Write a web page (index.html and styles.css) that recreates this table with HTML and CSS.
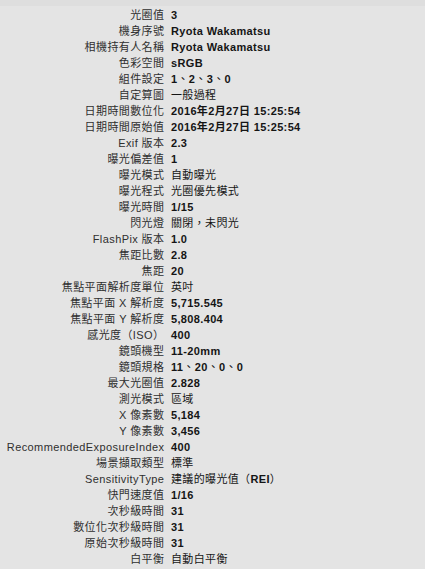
FILE: index.html
```html
<!DOCTYPE html>
<html lang="zh-Hant">
<head>
<meta charset="utf-8">
<title>Exif</title>
<link rel="stylesheet" href="styles.css">
</head>
<body>
<div class="strip"></div>
<div class="list">
  <div class="k">光圈值</div><div class="v">3</div>
  <div class="k">機身序號</div><div class="v">Ryota Wakamatsu</div>
  <div class="k">相機持有人名稱</div><div class="v">Ryota Wakamatsu</div>
  <div class="k">色彩空間</div><div class="v">sRGB</div>
  <div class="k">組件設定</div><div class="v">1<span class="c">、</span>2<span class="c">、</span>3<span class="c">、</span>0</div>
  <div class="k">自定算圖</div><div class="v"><span class="c">一般過程</span></div>
  <div class="k">日期時間數位化</div><div class="v">2016年2月27日 15:25:54</div>
  <div class="k">日期時間原始值</div><div class="v">2016年2月27日 15:25:54</div>
  <div class="k">Exif 版本</div><div class="v">2.3</div>
  <div class="k">曝光偏差值</div><div class="v">1</div>
  <div class="k">曝光模式</div><div class="v"><span class="c">自動曝光</span></div>
  <div class="k">曝光程式</div><div class="v"><span class="c">光圈優先模式</span></div>
  <div class="k">曝光時間</div><div class="v">1/15</div>
  <div class="k">閃光燈</div><div class="v"><span class="c">關閉，未閃光</span></div>
  <div class="k">FlashPix 版本</div><div class="v">1.0</div>
  <div class="k">焦距比數</div><div class="v">2.8</div>
  <div class="k">焦距</div><div class="v">20</div>
  <div class="k">焦點平面解析度單位</div><div class="v"><span class="c">英吋</span></div>
  <div class="k">焦點平面 X 解析度</div><div class="v">5,715.545</div>
  <div class="k">焦點平面 Y 解析度</div><div class="v">5,808.404</div>
  <div class="k">感光度（ISO）</div><div class="v">400</div>
  <div class="k">鏡頭機型</div><div class="v">11-20mm</div>
  <div class="k">鏡頭規格</div><div class="v">11<span class="c">、</span>20<span class="c">、</span>0<span class="c">、</span>0</div>
  <div class="k">最大光圈值</div><div class="v">2.828</div>
  <div class="k">測光模式</div><div class="v"><span class="c">區域</span></div>
  <div class="k">X 像素數</div><div class="v">5,184</div>
  <div class="k">Y 像素數</div><div class="v">3,456</div>
  <div class="k">RecommendedExposureIndex</div><div class="v">400</div>
  <div class="k">場景擷取類型</div><div class="v"><span class="c">標準</span></div>
  <div class="k">SensitivityType</div><div class="v"><span class="c">建議的曝光值（</span>REI<span class="c">）</span></div>
  <div class="k">快門速度值</div><div class="v">1/16</div>
  <div class="k">次秒級時間</div><div class="v">31</div>
  <div class="k">數位化次秒級時間</div><div class="v">31</div>
  <div class="k">原始次秒級時間</div><div class="v">31</div>
  <div class="k">白平衡</div><div class="v"><span class="c">自動白平衡</span></div>
</div>
</body>
</html>
```
FILE: styles.css
```css
html, body {
  margin: 0;
  padding: 0;
  background: #e4e4e4;
}
body {
  font-family: "Liberation Sans", "Noto Sans CJK TC", sans-serif;
  font-size: 11px;
  letter-spacing: 0.35px;
  width: 425px;
  height: 569px;
  overflow: hidden;
}
.strip {
  height: 6px;
  background: #dedede;
}
.list {
  display: grid;
  grid-template-columns: 164px 1fr;
  column-gap: 7px;
  padding-top: 1px;
}
.k, .v {
  height: 16px;
  line-height: 16px;
  white-space: nowrap;
}
.k {
  text-align: right;
  color: #2f2f2f;
  letter-spacing: 0.4px;
  margin-right: -0.4px;
}
.v {
  color: #151515;
  font-weight: 700;
}
.v .c {
  font-weight: 400;
}
```
